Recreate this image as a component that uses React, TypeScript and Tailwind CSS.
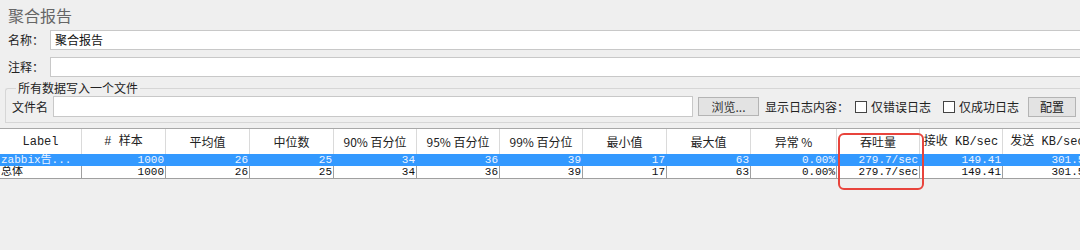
const cjk = "font-['Noto_Sans_CJK_SC',sans-serif]";
const mono = "font-['Liberation_Mono','Noto_Sans_CJK_SC',monospace]";

const cols = [
  { w: 82, head: "Label", m: true },
  { w: 84, head: "# 样本", m: true },
  { w: 84, head: "平均值" },
  { w: 84, head: "中位数" },
  { w: 83, head: "90% 百分位" },
  { w: 83, head: "95% 百分位" },
  { w: 83, head: "99% 百分位" },
  { w: 84, head: "最小值" },
  { w: 84, head: "最大值" },
  { w: 86, head: "异常 %" },
  { w: 83, head: "吞吐量" },
  { w: 83, head: "接收 KB/sec", m: true },
  { w: 90, head: "发送 KB/sec", m: true },
];

const rows = [
  ["zabbix告...", "1000", "26", "25", "34", "36", "39", "17", "63", "0.00%", "279.7/sec", "149.41", "301.58"],
  ["总体", "1000", "26", "25", "34", "36", "39", "17", "63", "0.00%", "279.7/sec", "149.41", "301.58"],
];

function Field({ label, value }: { label: string; value?: string }) {
  return (
    <div className="flex items-center h-[20px]">
      <span className={`w-[50px] pl-2 text-[12px] text-[#222] whitespace-nowrap ${cjk}`}>{label}</span>
      <div className={`flex-1 h-[20px] bg-white border border-[#c8c8c8] border-r-0 flex items-center pl-[4px] text-[12px] text-[#111] ${cjk}`}>
        {value}
      </div>
    </div>
  );
}

function Check({ label }: { label: string }) {
  return (
    <span className="flex items-center gap-[4px] whitespace-nowrap">
      <span className="w-[12px] h-[12px] bg-white border border-[#444]" />
      <span>{label}</span>
    </span>
  );
}

export default function App() {
  return (
    <div className="relative w-[1080px] h-[250px] bg-[#efefef] overflow-hidden">
      <div className={`pl-[8px] pt-[3px] h-[30px] text-[16px] text-[#666] ${cjk}`}>聚合报告</div>

      <div className="flex flex-col gap-[7px]">
        <Field label="名称：" value="聚合报告" />
        <Field label="注释：" />
      </div>

      <fieldset className="ml-[5px] mt-[4px] border border-[#d6d6d6] border-r-0 rounded-tl-[3px] pl-[6px] h-[42px]">
        <legend className={`ml-[4px] px-[2px] text-[12px] leading-[14px] text-[#222] ${cjk}`}>所有数据写入一个文件</legend>
        <div className={`flex items-center h-[21px] mt-[1px] text-[12px] text-[#222] whitespace-nowrap ${cjk}`}>
          <span className="w-[41px]">文件名</span>
          <div className="w-[640px] h-[21px] bg-white border border-[#c8c8c8]" />
          <button className="ml-[5px] w-[61px] h-[19px] bg-[#e3e3e3] border border-[#b4b4b4] text-[12px] text-[#333] flex items-center justify-center">
            浏览...
          </button>
          <span className="ml-[6px]">显示日志内容：</span>
          <span className="ml-[6px]"><Check label="仅错误日志" /></span>
          <span className="ml-[12px]"><Check label="仅成功日志" /></span>
          <button className="ml-[9px] w-[48px] h-[20px] bg-[#e3e3e3] border border-[#b4b4b4] text-[12px] text-[#222] flex items-center justify-center">
            配置
          </button>
        </div>
      </fieldset>

      <div className="mt-[5px] border-t border-[#a8a8a8]">
        <div className="flex bg-white">
          {cols.map((c, i) => (
            <div
              key={i}
              style={{ width: c.w }}
              className={`shrink-0 h-[25px] flex items-center justify-center whitespace-nowrap overflow-hidden border-r border-[#dadada] text-[12px] text-[#222] ${c.m ? mono : cjk}`}
            >
              {c.head}
            </div>
          ))}
        </div>
        {rows.map((r, ri) => (
          <div
            key={ri}
            className={`flex ${ri === 0 ? "h-[12px] bg-[#3399ff] text-[#eef4ff]" : "h-[13px] bg-white text-[#111] border-b border-[#a0a0a0]"}`}
          >
            {r.map((v, ci) => (
              <div
                key={ci}
                style={{ width: cols[ci].w }}
                className={`shrink-0 overflow-hidden whitespace-nowrap flex items-center px-[1px] text-[11px] leading-[12px] ${mono} ${
                  ci === 0 ? "justify-start" : "justify-end"
                } ${ri === 0 ? "border-r border-[#3399ff]" : "border-r border-[#a0a0a0]"}`}
              >
                {v}
              </div>
            ))}
          </div>
        ))}
      </div>

      <div className="absolute left-[838px] top-[133px] w-[86px] h-[57px] border-2 border-[#e8443c] rounded-[6px]" />
    </div>
  );
}
